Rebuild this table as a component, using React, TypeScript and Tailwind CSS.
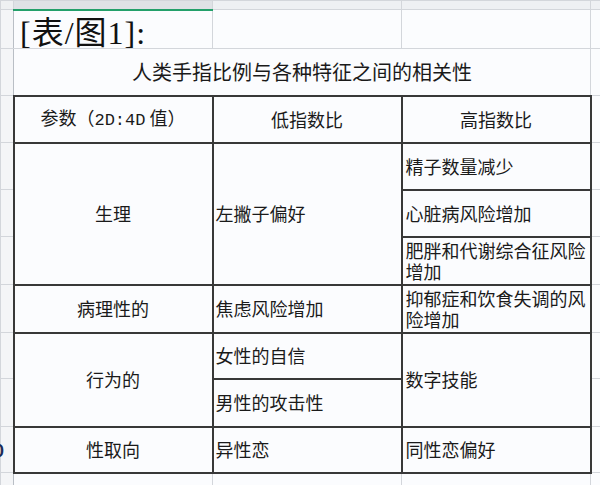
import React from "react";

const gridCell = "border border-[#d3d6db] bg-[#fbfcfe]";
const darkCell = "border-2 border-[#383838] bg-[#fbfcfe] align-middle text-[18px]";
const gutter = "border border-[#d3d6db] border-r-[#b9bec5] bg-[#f4f5f7] p-0";

function Gutter({ children }: { children?: React.ReactNode }) {
  return (
    <td className={gutter}>
      {children && (
        <div className="-ml-[7px] overflow-hidden text-[17px] font-bold leading-none text-[#1b2a55]">
          {children}
        </div>
      )}
    </td>
  );
}

function Spare() {
  return <td className={gridCell} />;
}

export default function App() {
  return (
    <div className="h-[485px] w-[600px] overflow-hidden bg-[#fbfcfe] font-['Noto_Sans_CJK_SC',sans-serif] text-[#1a1a1a]">
      <table className="w-[602px] table-fixed border-collapse">
        <colgroup>
          <col className="w-[13px]" />
          <col className="w-[199px]" />
          <col className="w-[189px]" />
          <col className="w-[189px]" />
          <col className="w-[12px]" />
        </colgroup>
        <tbody>
          {/* column header strip */}
          <tr className="h-[9px]">
            <td className="border border-[#d3d6db] bg-[#eef0f2]" />
            <td className="border border-[#d3d6db] border-b-2 border-b-[#23a06a] bg-[#dfe2e6]" />
            <td className="border border-[#d3d6db] bg-[#eef0f3]" />
            <td className="border border-[#d3d6db] bg-[#eef0f3]" />
            <td className="border border-[#d3d6db] bg-[#eef0f3]" />
          </tr>
          <tr className="h-[39px]">
            <Gutter />
            <td className={`${gridCell} whitespace-nowrap px-[6px] pb-0 align-bottom font-['Liberation_Serif','Noto_Sans_CJK_SC',serif] text-[32px] leading-[30px] tracking-[1px] text-[#111]`}>
              [表/图1]:
            </td>
            <Spare />
            <Spare />
            <Spare />
          </tr>
          <tr className="h-[47px]">
            <Gutter />
            <td colSpan={3} className={`${gridCell} text-center align-middle text-[20px]`}>
              人类手指比例与各种特征之间的相关性
            </td>
            <Spare />
          </tr>
          <tr className="h-[47px]">
            <Gutter />
            <td className={`${darkCell} text-center`}>
              参数（<span className="font-['Liberation_Mono',monospace] text-[17px]">2D:4D</span> 值）
            </td>
            <td className={`${darkCell} text-center`}>低指数比</td>
            <td className={`${darkCell} text-center`}>高指数比</td>
            <Spare />
          </tr>
          <tr className="h-[47px]">
            <Gutter />
            <td rowSpan={3} className={`${darkCell} text-center`}>生理</td>
            <td rowSpan={3} className={`${darkCell} pl-[2px]`}>左撇子偏好</td>
            <td className={`${darkCell} pl-[3px]`}>精子数量减少</td>
            <Spare />
          </tr>
          <tr className="h-[47px]">
            <Gutter />
            <td className={`${darkCell} pl-[3px]`}>心脏病风险增加</td>
            <Spare />
          </tr>
          <tr className="h-[48px]">
            <Gutter />
            <td className={`${darkCell} pl-[3px] leading-[21px]`}>肥胖和代谢综合征风险增加</td>
            <Spare />
          </tr>
          <tr className="h-[48px]">
            <Gutter />
            <td className={`${darkCell} text-center`}>病理性的</td>
            <td className={`${darkCell} pl-[2px]`}>焦虑风险增加</td>
            <td className={`${darkCell} pl-[3px] leading-[21px]`}>抑郁症和饮食失调的风险增加</td>
            <Spare />
          </tr>
          <tr className="h-[46px]">
            <Gutter />
            <td rowSpan={2} className={`${darkCell} text-center`}>行为的</td>
            <td className={`${darkCell} pl-[2px]`}>女性的自信</td>
            <td rowSpan={2} className={`${darkCell} pl-[3px]`}>数字技能</td>
            <Spare />
          </tr>
          <tr className="h-[48px]">
            <Gutter />
            <td className={`${darkCell} pl-[2px]`}>男性的攻击性</td>
            <Spare />
          </tr>
          <tr className="h-[46px]">
            <Gutter>0</Gutter>
            <td className={`${darkCell} text-center`}>性取向</td>
            <td className={`${darkCell} pl-[2px]`}>异性恋</td>
            <td className={`${darkCell} pl-[3px]`}>同性恋偏好</td>
            <Spare />
          </tr>
          <tr className="h-[40px]">
            <Gutter />
            <Spare />
            <Spare />
            <Spare />
            <Spare />
          </tr>
        </tbody>
      </table>
    </div>
  );
}
